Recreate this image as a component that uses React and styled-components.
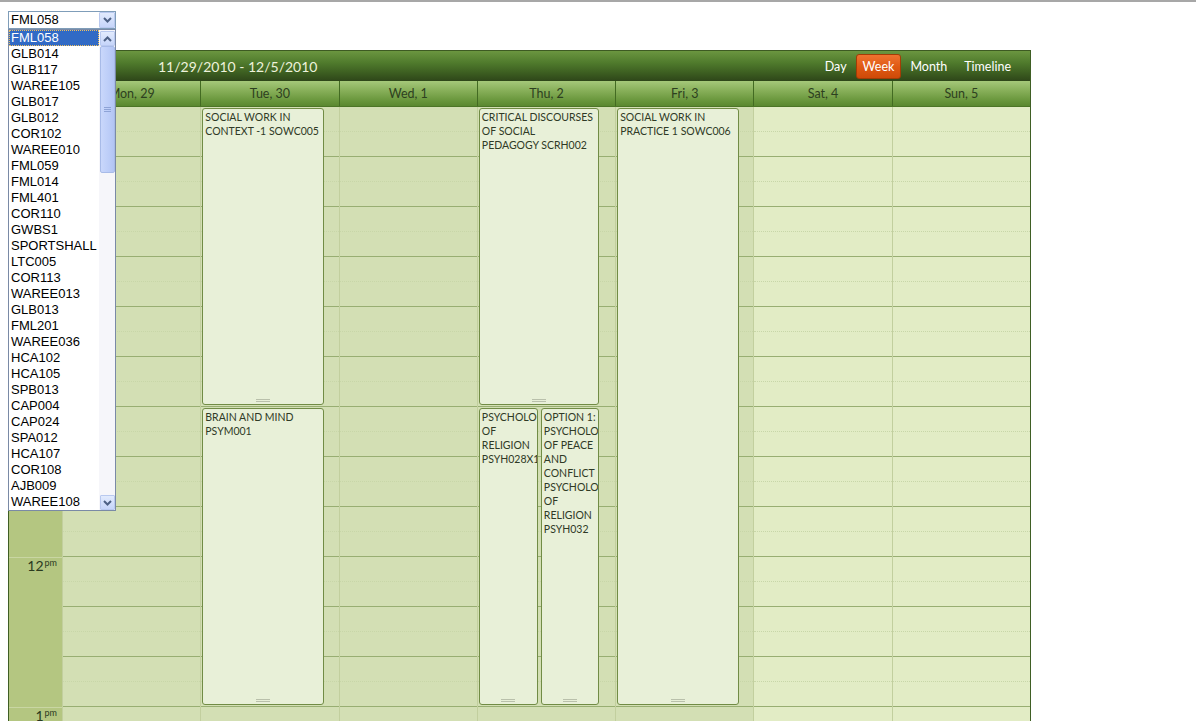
import React from "react";
import styled, { createGlobalStyle } from "styled-components";

const Global = createGlobalStyle`
  html, body { margin: 0; padding: 0; background: #fff; overflow: hidden; }
  body { font-family: "Liberation Sans", Arial, sans-serif; }
`;

const rooms = ["FML058","GLB014","GLB117","WAREE105","GLB017","GLB012","COR102","WAREE010","FML059","FML014","FML401","COR110","GWBS1","SPORTSHALL","LTC005","COR113","WAREE013","GLB013","FML201","WAREE036","HCA102","HCA105","SPB013","CAP004","CAP024","SPA012","HCA107","COR108","AJB009","WAREE108"];

const days = [
  { label: "Mon, 29", weekend: false },
  { label: "Tue, 30", weekend: false },
  { label: "Wed, 1", weekend: false },
  { label: "Thu, 2", weekend: false },
  { label: "Fri, 3", weekend: false },
  { label: "Sat, 4", weekend: true },
  { label: "Sun, 5", weekend: true },
];

// start/len in 25px slots
const appts = [
  { day: 1, start: 0, len: 12, left: 1, width: 122, pr: 0, text: "SOCIAL WORK IN CONTEXT -1 SOWC005" },
  { day: 1, start: 12, len: 12, left: 1, width: 122, pr: 0, text: "BRAIN AND MIND PSYM001" },
  { day: 3, start: 0, len: 12, left: 1, width: 120, pr: 4, text: "CRITICAL DISCOURSES OF SOCIAL PEDAGOGY SCRH002" },
  { day: 3, start: 12, len: 12, left: 1, width: 59, pr: 0, text: "PSYCHOLOGY OF RELIGION PSYH028X1" },
  { day: 3, start: 12, len: 12, left: 63, width: 58, pr: 0, text: "OPTION 1: PSYCHOLOGY OF PEACE AND CONFLICT PSYCHOLOGY OF RELIGION PSYH032" },
  { day: 4, start: 0, len: 24, left: 1, width: 122, pr: 0, text: "SOCIAL WORK IN PRACTICE 1 SOWC006" },
];

const hours = [
  ["9", "am"], ["10", "am"], ["11", "am"], ["12", "pm"], ["1", "pm"], ["2", "pm"],
];

const Page = styled.div`
  display: flex;
  flex-direction: column;
`;

const TopRule = styled.div`
  height: 2px;
  background: #a7a7a7;
`;

const Content = styled.div`
  padding: 0 8px;
  display: flex;
  flex-direction: column;
`;

const SelectWrap = styled.div`
  position: relative;
  margin-top: 9px;
  width: 108px;
  height: 18px;
  z-index: 5;
`;

const SelectBox = styled.div`
  box-sizing: border-box;
  height: 18px;
  border: 1px solid #7f9db9;
  background: #fff;
  display: flex;
  align-items: center;
  font-size: 13px;
  color: #000;
  padding-left: 2px;
`;

const SelectValue = styled.span`
  flex: 1;
  line-height: 16px;
`;

const ArrowBtn = styled.div`
  box-sizing: border-box;
  width: ${p => p.$w || 15}px;
  height: ${p => p.$h || 15}px;
  border: 1px solid #b9c9ef;
  border-radius: 1px;
  background: linear-gradient(180deg, #e2ebfd 0%, #c6d5fa 100%);
  display: flex;
  align-items: center;
  justify-content: center;
  flex: none;
`;

const List = styled.div`
  position: absolute;
  top: 18px;
  left: 0;
  box-sizing: border-box;
  width: 108px;
  height: 482px;
  border: 1px solid #7a8aa6;
  background: #fff;
  display: flex;
`;

const Items = styled.div`
  flex: 1;
  display: flex;
  flex-direction: column;
`;

const Item = styled.div`
  height: 16px;
  line-height: 16px;
  font-size: 13px;
  padding-left: 2px;
  color: ${p => (p.$sel ? "#fff" : "#000")};
  background: ${p => (p.$sel ? "#316ac5" : "transparent")};
  outline: ${p => (p.$sel ? "1px dotted #f0c060" : "none")};
  outline-offset: -1px;
  white-space: nowrap;
`;

const ScrollBar = styled.div`
  width: 16px;
  background: #f6f6fa;
  display: flex;
  flex-direction: column;
  align-items: center;
  padding-top: 1px;
  box-sizing: border-box;
`;

const Thumb = styled.div`
  box-sizing: border-box;
  width: 15px;
  height: 127px;
  border: 1px solid #a8bbe8;
  border-radius: 2px;
  background: linear-gradient(90deg, #c9d7fb 0%, #bccdf8 60%, #b3c5f4 100%);
  display: flex;
  align-items: center;
  justify-content: center;
`;

const Track = styled.div`
  flex: 1;
`;

const Grip = () => (
  <svg width="7" height="6" viewBox="0 0 7 6">
    <g stroke="#8ea3d6" strokeWidth="1">
      <line x1="0" y1="0.5" x2="7" y2="0.5" />
      <line x1="0" y1="2.5" x2="7" y2="2.5" />
      <line x1="0" y1="4.5" x2="7" y2="4.5" />
    </g>
  </svg>
);

const Chevron = ({ up }) => (
  <svg width="9" height="6" viewBox="0 0 9 6">
    <path d={up ? "M1 5 L4.5 1.5 L8 5" : "M1 1 L4.5 4.5 L8 1"} fill="none" stroke="#4d6185" strokeWidth="2" />
  </svg>
);

const Scheduler = styled.div`
  margin-top: 21px;
  width: 1023px;
  box-sizing: border-box;
  border-left: 1px solid #3f5e24;
  border-right: 1px solid #3f5e24;
  font-family: "Lato", "Noto Sans", sans-serif;
`;

const TopBar = styled.div`
  height: 31px;
  box-sizing: border-box;
  border-top: 1px solid #3d5a22;
  background: linear-gradient(180deg, #6b9640 0%, #4f7a2c 40%, #3b5c20 75%, #2e4619 100%);
  display: flex;
  align-items: center;
`;

const DateRange = styled.div`
  padding-left: 149px;
  flex: 1;
  font-size: 14px;
  color: #eef2dc;
`;

const Views = styled.div`
  display: flex;
  align-items: center;
  padding-right: 18px;
`;

const ViewBtn = styled.div`
  font-size: 12.5px;
  color: #fff;
  height: 25px;
  line-height: 23px;
  box-sizing: border-box;
  padding: 0 ${p => (p.$active ? 6 : 0)}px;
  margin-left: ${p => p.$ml || 0}px;
  border-radius: 3px;
  border: 1px solid ${p => (p.$active ? "#a43c06" : "transparent")};
  background: ${p => (p.$active ? "linear-gradient(180deg, #ee7330 0%, #e05a14 50%, #cf4a08 100%)" : "transparent")};
`;

const DayHeader = styled.div`
  display: grid;
  grid-template-columns: 53px repeat(7, 1fr);
  height: 26px;
  background: linear-gradient(180deg, #a5c87a 0%, #86ae58 40%, #6b983e 75%, #5a8830 100%);
  border-bottom: 1px solid #4c7526;
  box-sizing: border-box;
`;

const DayHead = styled.div`
  border-left: ${p => (p.$first ? "none" : "1px solid #436b22")};
  font-size: 12.5px;
  color: #2d4020;
  text-align: center;
  line-height: 26px;
  white-space: nowrap;
  overflow: hidden;
`;

const Body = styled.div`
  display: grid;
  grid-template-columns: 53px repeat(7, 1fr);
`;

const TimeCol = styled.div`
  background: #b4c681;
  display: flex;
  flex-direction: column;
`;

const HourCell = styled.div`
  height: 150px;
  box-sizing: border-box;
  border-top: ${p => (p.$first ? "none" : "1px solid #c9d6a3")};
  text-align: right;
  padding-right: 5px;
  font-size: 14px;
  color: #2b3a1e;
  line-height: 16px;
`;

const Sup = styled.sup`
  font-size: 9px;
  vertical-align: top;
  line-height: 9px;
  margin-left: 1px;
`;

const DayCol = styled.div`
  position: relative;
  border-left: 1px solid #c2cf9e;
  background: ${p => (p.$weekend ? "#e2ecc5" : "#d3dfb4")};
  display: flex;
  flex-direction: column;
`;

const Slot = styled.div`
  height: 25px;
  box-sizing: border-box;
  border-bottom: ${p => (p.$major ? "1px solid #98ae72" : "1px dotted #c8d6a8")};
`;

const Appt = styled.div`
  position: absolute;
  box-sizing: border-box;
  border: 1px solid #718c45;
  border-radius: 3px;
  background: #e8f0d8;
  padding: 1px ${p => p.$pr}px 0 2px;
  font-size: 10.5px;
  line-height: 14px;
  color: #2f3a26;
  overflow: hidden;
  &::after {
    content: "";
    position: absolute;
    left: 50%;
    bottom: 2px;
    width: 14px;
    height: 1px;
    margin-left: -7px;
    border-top: 1px solid #b9c0ab;
    border-bottom: 1px solid #b9c0ab;
  }
`;

const slotsPerDay = 40;

export default function App() {
  return (
    <Page>
      <Global />
      <TopRule />
      <Content>
        <SelectWrap>
          <SelectBox>
            <SelectValue>FML058</SelectValue>
            <ArrowBtn $w={16} $h={16}><Chevron /></ArrowBtn>
          </SelectBox>
          <List>
            <Items>
              {rooms.map((r, i) => (
                <Item key={r} $sel={i === 0}>{r}</Item>
              ))}
            </Items>
            <ScrollBar>
              <ArrowBtn><Chevron up /></ArrowBtn>
              <Thumb><Grip /></Thumb>
              <Track />
              <ArrowBtn><Chevron /></ArrowBtn>
            </ScrollBar>
          </List>
        </SelectWrap>

        <Scheduler>
          <TopBar>
            <DateRange>11/29/2010 - 12/5/2010</DateRange>
            <Views>
              <ViewBtn>Day</ViewBtn>
              <ViewBtn $active $ml={8}>Week</ViewBtn>
              <ViewBtn $ml={8}>Month</ViewBtn>
              <ViewBtn $ml={15}>Timeline</ViewBtn>
            </Views>
          </TopBar>
          <DayHeader>
            <DayHead $first />
            {days.map(d => (
              <DayHead key={d.label}>{d.label}</DayHead>
            ))}
          </DayHeader>
          <Body>
            <TimeCol>
              {hours.map(([h, s], i) => (
                <HourCell key={h + s} $first={i === 0}>
                  {h}<Sup>{s}</Sup>
                </HourCell>
              ))}
            </TimeCol>
            {days.map((d, di) => (
              <DayCol key={d.label} $weekend={d.weekend}>
                {Array.from({ length: slotsPerDay }).map((_, si) => (
                  <Slot key={si} $major={si % 2 === 1} />
                ))}
                {appts
                  .filter(a => a.day === di)
                  .map(a => (
                    <Appt
                      key={a.text}
                      $pr={a.pr}
                      style={{
                        top: a.start * 25 + 1,
                        height: a.len * 25 - 3,
                        left: a.left,
                        width: a.width,
                      }}
                    >
                      {a.text}
                    </Appt>
                  ))}
              </DayCol>
            ))}
          </Body>
        </Scheduler>
      </Content>
    </Page>
  );
}
